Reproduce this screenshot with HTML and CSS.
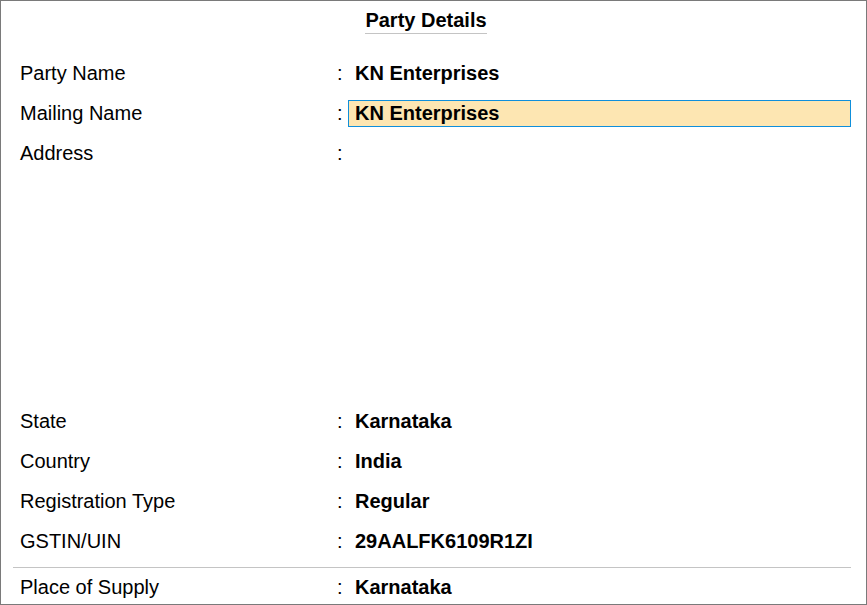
FILE: index.html
```html
<!DOCTYPE html>
<html>
<head>
<meta charset="utf-8">
<link rel="stylesheet" href="styles.css">
</head>
<body>
<div class="frame">
  <div class="title-bar"><span class="title">Party Details</span></div>
  <div class="fields">
    <div class="row"><span class="label">Party Name</span><span class="colon">:</span><span class="value">KN Enterprises</span></div>
    <div class="row"><span class="label">Mailing Name</span><span class="colon">:</span><span class="value input">KN Enterprises</span></div>
    <div class="row address"><span class="label">Address</span><span class="colon">:</span><span class="value"></span></div>
    <div class="row"><span class="label">State</span><span class="colon">:</span><span class="value">Karnataka</span></div>
    <div class="row"><span class="label">Country</span><span class="colon">:</span><span class="value">India</span></div>
    <div class="row"><span class="label">Registration Type</span><span class="colon">:</span><span class="value">Regular</span></div>
    <div class="row"><span class="label">GSTIN/UIN</span><span class="colon">:</span><span class="value">29AALFK6109R1ZI</span></div>
    <div class="sep"></div>
    <div class="row last"><span class="label">Place of Supply</span><span class="colon">:</span><span class="value">Karnataka</span></div>
  </div>
</div>
</body>
</html>
```
FILE: styles.css
```css
html, body {
  margin: 0;
  padding: 0;
  background: #ffffff;
}
body {
  font-family: "Liberation Sans", Arial, sans-serif;
  font-size: 20px;
  color: #000;
}
.frame {
  box-sizing: border-box;
  width: 867px;
  height: 605px;
  border: 1px solid #7a7a7a;
  overflow: hidden;
  display: flex;
  flex-direction: column;
}
.title-bar {
  flex-shrink: 0;
  height: 52px;
  display: flex;
  justify-content: center;
  align-items: flex-start;
}
.title {
  font-weight: bold;
  margin-top: 7px;
  line-height: 24px;
  padding-bottom: 1px;
  border-bottom: 1px solid #c4c4c4;
  margin-right: 15px;
}
.fields {
  flex-shrink: 0;
  display: flex;
  flex-direction: column;
}
.row {
  flex-shrink: 0;
  display: grid;
  grid-template-columns: 317px 18px 1fr;
  height: 40px;
  align-items: center;
  padding-left: 19px;
  padding-right: 15px;
}
.row.address {
  height: 268px;
  align-items: start;
  padding-top: 9px;
  box-sizing: border-box;
}
.label {
  line-height: 22px;
}
.colon {
  line-height: 22px;
}
.value {
  font-weight: bold;
  line-height: 22px;
}
.value.input {
  margin-left: -7px;
  height: 27px;
  box-sizing: border-box;
  border: 1px solid #0f8fdb;
  background: #fde6b2;
  padding-left: 6px;
  line-height: 25px;
}
.sep {
  flex-shrink: 0;
  margin: 6px 15px 0 12px;
  height: 1px;
  background: #c4c4c4;
}
.row.last {
  height: 38px;
}
```
